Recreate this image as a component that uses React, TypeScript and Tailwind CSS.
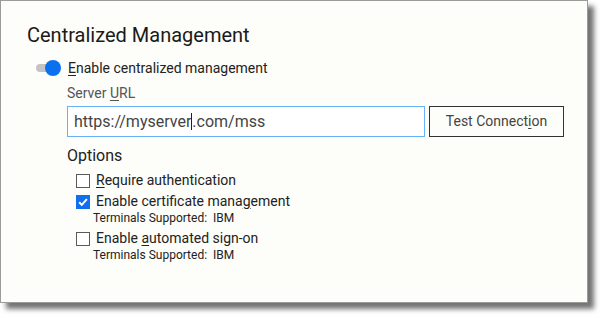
import React from "react";

function Check({ checked }: { checked?: boolean }) {
  if (checked) {
    return (
      <span className="flex h-[14px] w-[14px] shrink-0 items-center justify-center bg-[#0f6fee]">
        <svg width="12" height="12" viewBox="0 0 12 12">
          <path d="M2.2 6.3 L4.8 8.9 L9.9 3.2" fill="none" stroke="#fff" strokeWidth="2" />
        </svg>
      </span>
    );
  }
  return <span className="block h-[14px] w-[14px] shrink-0 border border-[#5a5a5a] bg-white" />;
}

export default function App() {
  return (
    <div className="min-h-[318px] w-[603px] bg-white" style={{ fontFamily: "Roboto, 'Liberation Sans', sans-serif" }}>
      <div className="h-[303px] w-[588px] border border-[#9b9b9b] bg-[#fdfdf9] shadow-[6px_6px_5px_rgba(0,0,0,0.55)]">
        <div className="pl-[26px] pt-[22px] text-[20px] leading-[24px] text-[#1a1a1a]">Centralized Management</div>
        <div className="ml-[35px] mt-[11px] flex h-[20px] items-center">
          <div className="relative h-[16px] w-[25px]">
            <div className="absolute left-0 top-[4px] h-[8px] w-[18px] rounded-full bg-[#c4c4c4]" />
            <div className="absolute left-[9px] top-0 h-[16px] w-[16px] rounded-full bg-[#0b70f0]" />
          </div>
          <span className="ml-[7px] text-[14px] leading-[20px] text-[#222]">
            <span className="underline underline-offset-2">E</span>nable centralized management
          </span>
        </div>
        <div className="ml-[66px]">
          <div className="mt-[5px] text-[14px] leading-[20px] text-[#555]">
            Server <span className="underline underline-offset-2">U</span>RL
          </div>
          <div className="mt-[3px] flex h-[31px] items-stretch gap-[4px]">
            <div className="flex w-[358px] items-center border border-[#68b2f6] bg-white pl-[6px] text-[16px] text-[#444]">
              https://myserver<span className="inline-block h-[17px] w-px bg-[#222]" />.com/mss
            </div>
            <div className="flex w-[135px] items-center justify-center border border-[#333] bg-[#fdfdf9] text-[14px] text-[#444]">
              Test Connect<span className="underline underline-offset-2">i</span>on
            </div>
          </div>
          <div className="mt-[8px] text-[16px] leading-[22px] text-[#222]">Options</div>
          <div className="ml-[9px] mt-[4px] flex flex-col text-[#222]">
            <div className="flex h-[19px] items-center gap-[6px] text-[14px]">
              <Check />
              <span><span className="underline underline-offset-2">R</span>equire authentication</span>
            </div>
            <div className="mt-[2px] flex h-[19px] items-center gap-[6px] text-[14px]">
              <Check checked />
              <span>Enable certificate mana<span className="underline underline-offset-2">g</span>ement</span>
            </div>
            <div className="ml-[17px] whitespace-pre text-[12px] leading-[14px]">Terminals Supported:  IBM</div>
            <div className="mt-[4px] flex h-[19px] items-center gap-[6px] text-[14px]">
              <Check />
              <span>Enable <span className="underline underline-offset-2">a</span>utomated sign-on</span>
            </div>
            <div className="ml-[17px] whitespace-pre text-[12px] leading-[14px]">Terminals Supported:  IBM</div>
          </div>
        </div>
      </div>
    </div>
  );
}
